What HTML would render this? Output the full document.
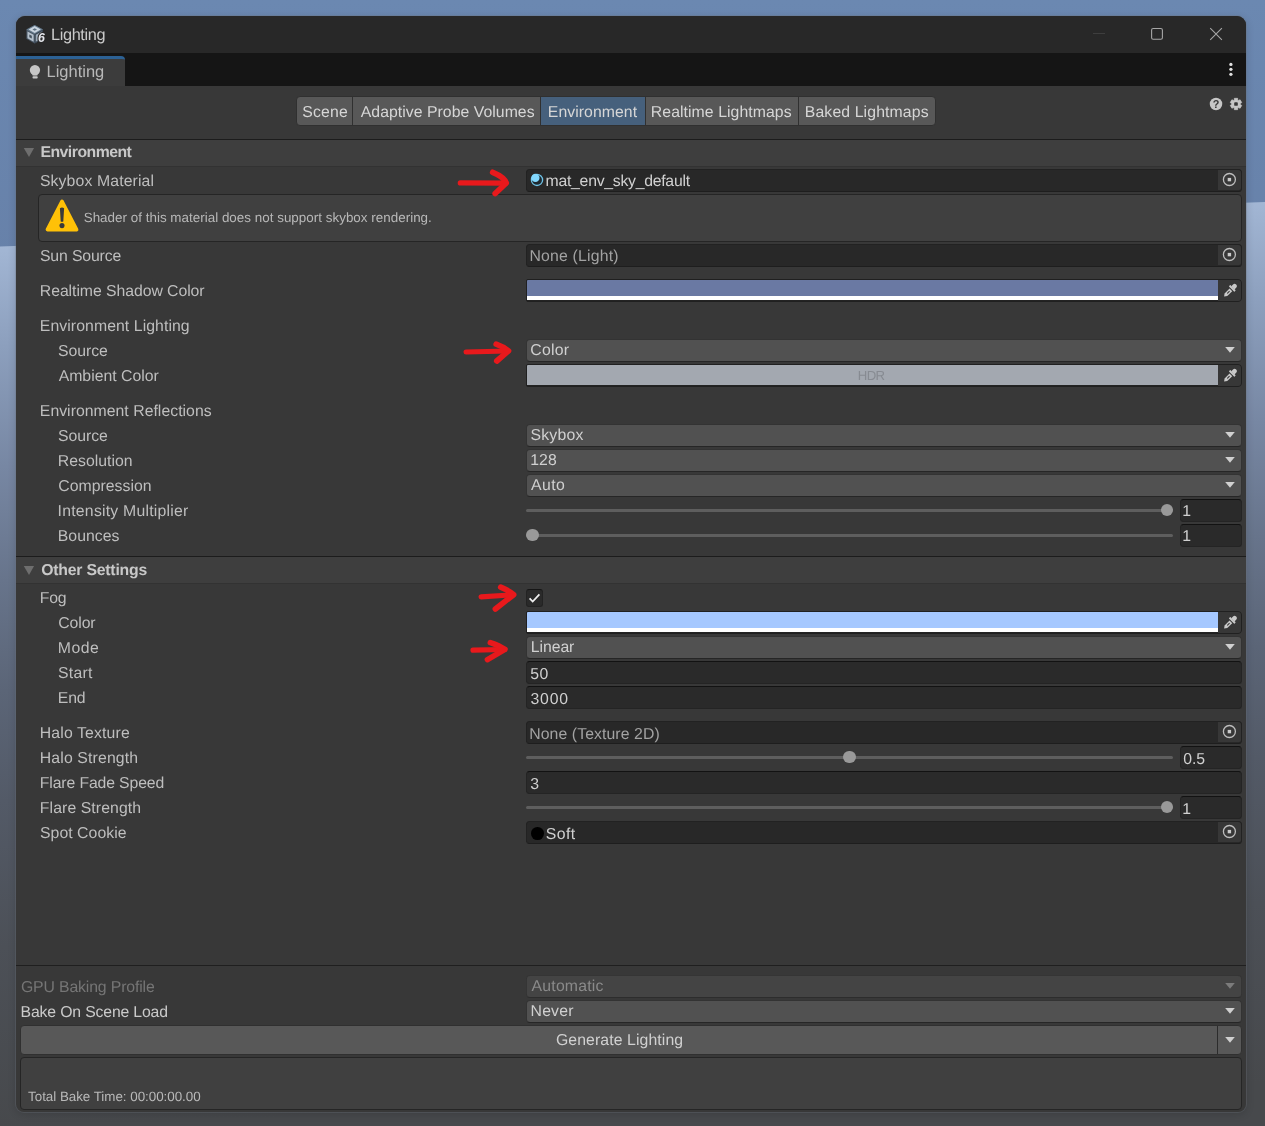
<!DOCTYPE html>
<html lang="en"><head><meta charset="utf-8"><title>Lighting</title>
<style>

html,body{margin:0;padding:0;}
body{width:1265px;height:1126px;overflow:hidden;position:relative;background:#5a6578;font-family:"Liberation Sans",sans-serif;}
.a{position:absolute;}
.t{position:absolute;white-space:nowrap;line-height:20px;height:20px;font-size:15.8px;color:#c4c4c4;text-rendering:geometricPrecision;}
.ttl{color:#cacaca;}
.tab{color:#b8b8b8;}
.btn{color:#d6d6d6;}
.hdr{font-weight:bold;color:#c8c8c8;}
.lbl{color:#bebebe;}
.lbl2{color:#cacaca;}
.dis{color:#757575;}
.disv{color:#8a8a8a;}
.val{color:#d0d0d0;}
.none{color:#a2a2a2;}
.hdr2{color:#878b92;}
.help{color:#b8b8b8;}
#win{position:absolute;left:16px;top:16px;width:1230px;height:1096px;border-radius:9px 9px 8px 8px;background:#383838;overflow:hidden;box-shadow:0 0 0 1px rgba(110,116,126,.3),0 2px 8px rgba(0,0,0,.16);}
.fld{position:absolute;box-sizing:border-box;height:23px;border-radius:3.5px;}
.obj{background:#282828;border:1px solid #222222;border-bottom-color:#1e1e1e;}
.num{background:#2a2a2a;border:1px solid #242424;border-top-color:#121212;}
.dd{background:#515151;border:1px solid #333333;border-bottom-color:#262626;border-radius:4px;}
.ddd{background:#444444;border:1px solid #353535;border-bottom-color:#2d2d2d;border-radius:4px;}
.pick{position:absolute;right:0;top:0;width:23px;height:20px;background:#373737;border-radius:0 3px 2px 0;}

</style></head><body>
<svg class="a" style="left:0;top:0" width="1265" height="1126" viewBox="0 0 1265 1126">
<defs>
<linearGradient id="sky" x1="0" y1="0" x2="0" y2="1"><stop offset="0" stop-color="#6b88b1"/><stop offset="1" stop-color="#6781a9"/></linearGradient>
<linearGradient id="gnd" gradientUnits="userSpaceOnUse" x1="0" y1="246.5" x2="30.9" y2="1126">
<stop offset="0" stop-color="#a2b6d4"/><stop offset="0.114" stop-color="#8c9fbd"/><stop offset="0.25" stop-color="#7787a3"/><stop offset="0.38" stop-color="#67748b"/><stop offset="0.505" stop-color="#5b6577"/><stop offset="0.63" stop-color="#535a67"/><stop offset="0.795" stop-color="#4c5057"/><stop offset="1" stop-color="#47494c"/></linearGradient>
</defs>
<rect width="1265" height="260" fill="url(#sky)"/>
<polygon points="0,246.5 1265,202 1265,1126 0,1126" fill="url(#gnd)"/>
</svg>
<div id="win">
<div class="a" style="left:-16px;top:-16px;width:1265px;height:1126px;will-change:transform">
<div class="a" style="left:16px;top:16px;width:1230px;height:37px;background:#282828"></div>
<div class="a" style="left:16px;top:53px;width:1230px;height:33px;background:#151515"></div>
<div class="a" style="left:16px;top:56px;width:109px;height:30px;background:#3c3c3c;border-top:3px solid #2c6194;box-sizing:border-box;border-radius:0 4px 0 0"></div>
<div class="a" style="left:296px;top:96px;width:640px;height:30px;box-sizing:border-box;background:#585858;border:1px solid #303030;border-radius:4px;overflow:hidden"><div class="a" style="left:244px;top:0;width:104px;height:28px;background:#46607c"></div><div class="a" style="left:55px;top:0;width:1px;height:28px;background:#303030"></div><div class="a" style="left:243px;top:0;width:1px;height:28px;background:#303030"></div><div class="a" style="left:348px;top:0;width:1px;height:28px;background:#303030"></div><div class="a" style="left:501px;top:0;width:1px;height:28px;background:#303030"></div></div>
<div class="a" style="left:16px;top:139px;width:1230px;height:28px;box-sizing:border-box;background:#3e3e3e;border-top:1px solid #1c1c1c;border-bottom:1px solid #323232"></div>
<svg class="a" style="left:23px;top:148px" width="12" height="10" viewBox="0 0 12 10"><polygon points="0.8,0 11.1,0 6,9" fill="#6e6e6e"/></svg>
<div class="a" style="left:16px;top:556px;width:1230px;height:28px;box-sizing:border-box;background:#3e3e3e;border-top:1px solid #1c1c1c;border-bottom:1px solid #323232"></div>
<svg class="a" style="left:23px;top:566px" width="12" height="10" viewBox="0 0 12 10"><polygon points="0.8,0 11.1,0 6,9" fill="#6e6e6e"/></svg>
<div class="a" style="left:16px;top:965px;width:1230px;height:1px;background:#1f1f1f"></div>
<div class="a" style="left:38px;top:194px;width:1204px;height:48px;box-sizing:border-box;background:#404040;border:1px solid #252525;border-radius:4px"></div>
<svg class="a" style="left:44px;top:197px" width="36" height="37" viewBox="0 0 36 37"><path d="M18 4.4 L32.6 32.6 L3.4 32.6 Z" fill="#ffc107" stroke="#ffc107" stroke-width="3.6" stroke-linejoin="round"/><path d="M15.9 11.2 Q18 10 20.1 11.2 L19.3 24.4 Q18 25 16.7 24.4 Z" fill="#3a3a3a"/><circle cx="18" cy="28.6" r="2.55" fill="#3a3a3a"/></svg>
<div class="fld obj" style="left:526px;top:169px;width:716px"><div class="pick"><svg class="a" style="left:4px;top:2px" width="15" height="15" viewBox="0 0 15 15"><circle cx="7.4" cy="7.5" r="6" fill="none" stroke="#bebebe" stroke-width="1.3"/><rect x="5.7" y="5.9" width="3.4" height="3.4" fill="#cacaca"/></svg></div></div>
<div class="fld obj" style="left:526px;top:244px;width:716px"><div class="pick"><svg class="a" style="left:4px;top:2px" width="15" height="15" viewBox="0 0 15 15"><circle cx="7.4" cy="7.5" r="6" fill="none" stroke="#bebebe" stroke-width="1.3"/><rect x="5.7" y="5.9" width="3.4" height="3.4" fill="#cacaca"/></svg></div></div>
<div class="fld" style="left:526px;top:279px;width:716px;background:#232323;border:1px solid #202020;border-radius:2px 4px 4px 2px;overflow:hidden"><div class="a" style="left:0;top:0;width:691px;height:20px;background:#6a79a3"></div><div class="a" style="left:0;top:16px;width:691px;height:4px;background:#ffffff"></div><div class="a" style="left:691px;top:0;width:23px;height:21px;background:#373737"></div><svg class="a" style="left:696.1px;top:1.7px" width="16" height="16" viewBox="0 0 16 16"><g transform="translate(1.1,14.6) rotate(-45)" fill="#c9c9c9"><path d="M0 0 L2.6 -1.9 L9.6 -1.9 L9.6 1.9 L2.6 1.9 Z"/><rect x="10.6" y="-3.9" width="2" height="7.8" rx="0.5"/><path d="M12.4 -2.2 L15.2 -2.2 Q17.1 -2.2 17.1 0 Q17.1 2.2 15.2 2.2 L12.4 2.2 Z"/><rect x="4.4" y="-0.55" width="3.4" height="1.1" rx="0.5" fill="#3a3a3a"/></g></svg></div>
<div class="fld dd" style="left:526px;top:339px;width:716px"></div>
<svg class="a" style="left:1224.6px;top:346.9px" width="10" height="6" viewBox="0 0 10 6"><polygon points="0.2,0.1 9.8,0.1 5,5.8" fill="#d0d0d0"/></svg>
<div class="fld" style="left:526px;top:364px;width:716px;background:#232323;border:1px solid #202020;border-radius:2px 4px 4px 2px;overflow:hidden"><div class="a" style="left:0;top:0;width:691px;height:20px;background:#a3a8b0"></div><div class="a" style="left:691px;top:0;width:23px;height:21px;background:#373737"></div><svg class="a" style="left:696.1px;top:1.7px" width="16" height="16" viewBox="0 0 16 16"><g transform="translate(1.1,14.6) rotate(-45)" fill="#c9c9c9"><path d="M0 0 L2.6 -1.9 L9.6 -1.9 L9.6 1.9 L2.6 1.9 Z"/><rect x="10.6" y="-3.9" width="2" height="7.8" rx="0.5"/><path d="M12.4 -2.2 L15.2 -2.2 Q17.1 -2.2 17.1 0 Q17.1 2.2 15.2 2.2 L12.4 2.2 Z"/><rect x="4.4" y="-0.55" width="3.4" height="1.1" rx="0.5" fill="#3a3a3a"/></g></svg></div>
<div class="fld dd" style="left:526px;top:424px;width:716px"></div>
<svg class="a" style="left:1224.6px;top:431.9px" width="10" height="6" viewBox="0 0 10 6"><polygon points="0.2,0.1 9.8,0.1 5,5.8" fill="#d0d0d0"/></svg>
<div class="fld dd" style="left:526px;top:449px;width:716px"></div>
<svg class="a" style="left:1224.6px;top:456.9px" width="10" height="6" viewBox="0 0 10 6"><polygon points="0.2,0.1 9.8,0.1 5,5.8" fill="#d0d0d0"/></svg>
<div class="fld dd" style="left:526px;top:474px;width:716px"></div>
<svg class="a" style="left:1224.6px;top:481.9px" width="10" height="6" viewBox="0 0 10 6"><polygon points="0.2,0.1 9.8,0.1 5,5.8" fill="#d0d0d0"/></svg>
<div class="a" style="left:526px;top:509.0px;width:647px;height:3px;background:#5e5e5e;border-radius:1.5px"></div>
<div class="a" style="left:1160.6000000000001px;top:503.9px;width:12.6px;height:12.6px;border-radius:50%;background:#999999"></div>
<div class="fld num" style="left:1180px;top:499px;width:62px"></div>
<div class="a" style="left:526px;top:534.0px;width:647px;height:3px;background:#5e5e5e;border-radius:1.5px"></div>
<div class="a" style="left:526.0px;top:528.9px;width:12.6px;height:12.6px;border-radius:50%;background:#999999"></div>
<div class="fld num" style="left:1180px;top:524px;width:62px"></div>
<div class="a" style="left:526px;top:589px;width:17px;height:18px;box-sizing:border-box;background:#2a2a2a;border:1px solid #232323;border-top-color:#161616;border-radius:3px"></div>
<svg class="a" style="left:527px;top:590px" width="15" height="16" viewBox="527 590 15 16"><path d="M529.6 598.4 L532.7 601.6 L539.4 594.4" stroke="#f0f0f0" stroke-width="1.7" fill="none"/></svg>
<div class="fld" style="left:526px;top:611px;width:716px;background:#232323;border:1px solid #202020;border-radius:2px 4px 4px 2px;overflow:hidden"><div class="a" style="left:0;top:0;width:691px;height:20px;background:#a5c8ff"></div><div class="a" style="left:0;top:16px;width:691px;height:4px;background:#ffffff"></div><div class="a" style="left:691px;top:0;width:23px;height:21px;background:#373737"></div><svg class="a" style="left:696.1px;top:1.7px" width="16" height="16" viewBox="0 0 16 16"><g transform="translate(1.1,14.6) rotate(-45)" fill="#c9c9c9"><path d="M0 0 L2.6 -1.9 L9.6 -1.9 L9.6 1.9 L2.6 1.9 Z"/><rect x="10.6" y="-3.9" width="2" height="7.8" rx="0.5"/><path d="M12.4 -2.2 L15.2 -2.2 Q17.1 -2.2 17.1 0 Q17.1 2.2 15.2 2.2 L12.4 2.2 Z"/><rect x="4.4" y="-0.55" width="3.4" height="1.1" rx="0.5" fill="#3a3a3a"/></g></svg></div>
<div class="fld dd" style="left:526px;top:636px;width:716px"></div>
<svg class="a" style="left:1224.6px;top:643.9px" width="10" height="6" viewBox="0 0 10 6"><polygon points="0.2,0.1 9.8,0.1 5,5.8" fill="#d0d0d0"/></svg>
<div class="fld num" style="left:526px;top:661px;width:716px"></div>
<div class="fld num" style="left:526px;top:686px;width:716px"></div>
<div class="fld obj" style="left:526px;top:721px;width:716px"><div class="pick"><svg class="a" style="left:4px;top:2px" width="15" height="15" viewBox="0 0 15 15"><circle cx="7.4" cy="7.5" r="6" fill="none" stroke="#bebebe" stroke-width="1.3"/><rect x="5.7" y="5.9" width="3.4" height="3.4" fill="#cacaca"/></svg></div></div>
<div class="a" style="left:526px;top:756.0px;width:647px;height:3px;background:#5e5e5e;border-radius:1.5px"></div>
<div class="a" style="left:843.3000000000001px;top:750.9px;width:12.6px;height:12.6px;border-radius:50%;background:#999999"></div>
<div class="fld num" style="left:1180px;top:746px;width:62px"></div>
<div class="fld num" style="left:526px;top:771px;width:716px"></div>
<div class="a" style="left:526px;top:806.0px;width:647px;height:3px;background:#5e5e5e;border-radius:1.5px"></div>
<div class="a" style="left:1160.6000000000001px;top:800.9px;width:12.6px;height:12.6px;border-radius:50%;background:#999999"></div>
<div class="fld num" style="left:1180px;top:796px;width:62px"></div>
<div class="fld obj" style="left:526px;top:821px;width:716px"><div class="pick"><svg class="a" style="left:4px;top:2px" width="15" height="15" viewBox="0 0 15 15"><circle cx="7.4" cy="7.5" r="6" fill="none" stroke="#bebebe" stroke-width="1.3"/><rect x="5.7" y="5.9" width="3.4" height="3.4" fill="#cacaca"/></svg></div></div>
<div class="fld ddd" style="left:526px;top:975px;width:716px"></div>
<svg class="a" style="left:1224.6px;top:982.9px" width="10" height="6" viewBox="0 0 10 6"><polygon points="0.2,0.1 9.8,0.1 5,5.8" fill="#7c7c7c"/></svg>
<div class="fld dd" style="left:526px;top:1000px;width:716px"></div>
<svg class="a" style="left:1224.6px;top:1007.9px" width="10" height="6" viewBox="0 0 10 6"><polygon points="0.2,0.1 9.8,0.1 5,5.8" fill="#d0d0d0"/></svg>
<div class="a" style="left:20px;top:1025px;width:1222px;height:30px;box-sizing:border-box;background:#585858;border:1px solid #303030;border-radius:4px"></div>
<div class="a" style="left:1217px;top:1026px;width:1px;height:28px;background:#2c2c2c"></div>
<svg class="a" style="left:1224.8px;top:1037px" width="10" height="6" viewBox="0 0 10 6"><polygon points="0.2,0.1 9.8,0.1 5,5.8" fill="#d0d0d0"/></svg>
<div class="a" style="left:20px;top:1057px;width:1222px;height:53px;box-sizing:border-box;background:#404040;border:1px solid #252525;border-radius:4px"></div>
<svg class="a" style="left:530px;top:173px" width="14" height="14" viewBox="530 173 14 14"><circle cx="537" cy="179.9" r="5.6" fill="#1d2930" stroke="#6fc2e6" stroke-width="1.3"/><circle cx="535.4" cy="177.9" r="4.15" fill="#82d8ff"/></svg>
<div class="a" style="left:531.1px;top:827.1px;width:12.8px;height:12.8px;border-radius:50%;background:#000"></div>
<div class="a" style="left:1093px;top:33px;width:12px;height:1px;background:#3e3e3e"></div>
<svg class="a" style="left:1150px;top:27px" width="14" height="14" viewBox="1150 27 14 14"><rect x="1151.6" y="28.5" width="10.8" height="10.8" rx="1.6" fill="none" stroke="#a6a6a6" stroke-width="1.1"/></svg>
<svg class="a" style="left:1209px;top:27px" width="14" height="14" viewBox="1209 27 14 14"><path d="M1210.2 28.2 L1221.9 39.9 M1221.9 28.2 L1210.2 39.9" stroke="#a6a6a6" stroke-width="1.1"/></svg>
<svg class="a" style="left:1228px;top:62px" width="6" height="15" viewBox="1228 62 6 15"><circle cx="1230.9" cy="64.4" r="1.65" fill="#e0e0e0"/><circle cx="1230.9" cy="69.35" r="1.65" fill="#e0e0e0"/><circle cx="1230.9" cy="74.3" r="1.65" fill="#e0e0e0"/></svg>
<svg class="a" style="left:1209px;top:97px" width="14" height="14" viewBox="1209 97 14 14"><circle cx="1216" cy="104" r="6.25" fill="#c6c6c6"/><text x="1216" y="107.9" font-size="10.8" font-weight="bold" text-anchor="middle" fill="#383838" font-family="Liberation Sans, sans-serif">?</text></svg>
<svg class="a" style="left:1229px;top:97px" width="14" height="14" viewBox="-7 -7 14 14"><polygon points="-1.80,-3.69 -1.63,-5.67 1.63,-5.67 1.80,-3.69 2.29,-3.40 4.10,-4.24 5.72,-1.43 4.09,-0.29 4.09,0.29 5.72,1.43 4.10,4.24 2.29,3.40 1.80,3.69 1.63,5.67 -1.63,5.67 -1.80,3.69 -2.29,3.40 -4.10,4.24 -5.72,1.43 -4.09,0.29 -4.09,-0.29 -5.72,-1.43 -4.10,-4.24 -2.29,-3.40" fill="#c6c6c6" stroke="#c6c6c6" stroke-width="0.7" stroke-linejoin="round"/><rect x="-1.8" y="-1.8" width="3.6" height="3.6" rx="0.9" fill="#383838"/></svg>
<svg class="a" style="left:25px;top:23px" width="22" height="22" viewBox="25 23 22 22"><polygon points="34.70,24.90 43.00,29.60 43.00,38.80 34.70,43.50 26.40,38.80 26.40,29.60" fill="#4a5866"/><polygon points="34.70,24.90 43.00,29.60 34.70,34.20 26.40,29.60" fill="#64788a"/><polygon points="34.70,34.20 43.00,29.60 43.00,38.80 34.70,43.50" fill="#3a4653"/><polygon points="34.70,26.12 40.84,29.59 34.70,33.00 28.56,29.59" fill="#c9d4df"/><polygon points="27.48,31.40 33.62,34.80 33.62,41.69 27.48,38.21" fill="#b4c0cc"/><polygon points="35.78,34.80 41.92,31.40 41.92,38.21 35.78,41.69" fill="#9dabb9"/><polygon points="34.70,28.31 36.94,29.58 34.70,30.82 32.46,29.58" fill="#5d7080"/><polygon points="29.30,34.45 31.80,35.83 31.80,38.62 29.30,37.21" fill="#46535f"/><text x="41.4" y="42.4" font-size="12.2" font-weight="bold" font-style="italic" text-anchor="middle" fill="#e6e8ee" stroke="#282828" stroke-width="2.2" paint-order="stroke" font-family="Liberation Sans, sans-serif">6</text></svg>
<svg class="a" style="left:28px;top:64px" width="14" height="16" viewBox="28 64 14 16"><circle cx="34.95" cy="70.05" r="5.15" fill="#c6c6c6"/><rect x="32.5" y="73.6" width="4.9" height="1.9" fill="#c6c6c6"/><rect x="32.5" y="76.2" width="5.2" height="2.2" rx="0.9" fill="#c6c6c6"/></svg>
<svg class="a" style="left:455px;top:167px" width="58" height="32" viewBox="455 167 58 32"><g stroke="#e8191c" stroke-width="5.2" fill="none" stroke-linecap="round" stroke-linejoin="round"><path d="M460.3 182.9 L505.9 183.1"/><path stroke-width="5.7" d="M492.7 172.3 Q504.5 177.2 506.29999999999995 183.0 L495.2 193.5"/></g></svg>
<svg class="a" style="left:461px;top:339px" width="55" height="28" viewBox="461 339 55 28"><g stroke="#e8191c" stroke-width="5.2" fill="none" stroke-linecap="round" stroke-linejoin="round"><path d="M466.1 352.0 L508.1 351.0"/><path stroke-width="5.7" d="M496.2 344.2 Q504.04999999999995 347.1 508.5 350.9 L496.8 361.0"/></g></svg>
<svg class="a" style="left:476px;top:582px" width="45" height="32" viewBox="476 582 45 32"><g stroke="#e8191c" stroke-width="5.2" fill="none" stroke-linecap="round" stroke-linejoin="round"><path d="M481.1 596.8 L513.2 594.8"/><path stroke-width="5.7" d="M500.7 587.2 Q508.85 590.5 513.6 594.6999999999999 L495.4 608.9"/></g></svg>
<svg class="a" style="left:468px;top:637px" width="44" height="28" viewBox="468 637 44 28"><g stroke="#e8191c" stroke-width="5.2" fill="none" stroke-linecap="round" stroke-linejoin="round"><path d="M473.0 650.1 L504.5 649.5"/><path stroke-width="5.7" d="M490.4 642.6 Q499.34999999999997 645.55 504.9 649.4 L487.5 659.6"/></g></svg>
<span class="t ttl" style="left:51.09px;top:25.00px;font-size:16.3px;letter-spacing:-0.372px;">Lighting</span>
<span class="t tab" style="left:46.53px;top:62.00px;font-size:16.5px;letter-spacing:-0.005px;">Lighting</span>
<span class="t btn" style="left:302.27px;top:103.00px;letter-spacing:0.184px;">Scene</span>
<span class="t btn" style="left:360.76px;top:103.00px;letter-spacing:0.039px;">Adaptive Probe Volumes</span>
<span class="t btn" style="left:547.82px;top:103.00px;letter-spacing:0.059px;">Environment</span>
<span class="t btn" style="left:650.82px;top:103.00px;letter-spacing:0.069px;">Realtime Lightmaps</span>
<span class="t btn" style="left:804.82px;top:103.00px;letter-spacing:0.119px;">Baked Lightmaps</span>
<span class="t hdr" style="left:40.45px;top:143.00px;letter-spacing:-0.514px;">Environment</span>
<span class="t hdr" style="left:41.23px;top:561.00px;letter-spacing:-0.217px;">Other Settings</span>
<span class="t lbl" style="left:39.94px;top:172.00px;letter-spacing:0.118px;">Skybox Material</span>
<span class="t lbl" style="left:39.94px;top:247.00px;letter-spacing:-0.136px;">Sun Source</span>
<span class="t lbl" style="left:39.82px;top:282.00px;letter-spacing:-0.058px;">Realtime Shadow Color</span>
<span class="t lbl" style="left:39.82px;top:317.00px;letter-spacing:0.075px;">Environment Lighting</span>
<span class="t lbl" style="left:57.94px;top:342.00px;letter-spacing:-0.021px;">Source</span>
<span class="t lbl" style="left:58.65px;top:367.00px;letter-spacing:0.010px;">Ambient Color</span>
<span class="t lbl" style="left:39.82px;top:402.00px;letter-spacing:0.027px;">Environment Reflections</span>
<span class="t lbl" style="left:57.94px;top:427.00px;letter-spacing:-0.021px;">Source</span>
<span class="t lbl" style="left:57.82px;top:452.00px;letter-spacing:0.007px;">Resolution</span>
<span class="t lbl" style="left:58.35px;top:477.00px;letter-spacing:0.015px;">Compression</span>
<span class="t lbl" style="left:57.62px;top:502.00px;letter-spacing:0.228px;">Intensity Multiplier</span>
<span class="t lbl" style="left:57.82px;top:527.00px;letter-spacing:0.022px;">Bounces</span>
<span class="t lbl" style="left:39.82px;top:589.00px;letter-spacing:-0.218px;">Fog</span>
<span class="t lbl" style="left:58.35px;top:614.00px;letter-spacing:-0.140px;">Color</span>
<span class="t lbl" style="left:57.82px;top:639.00px;letter-spacing:0.461px;">Mode</span>
<span class="t lbl" style="left:57.94px;top:664.00px;letter-spacing:0.264px;">Start</span>
<span class="t lbl" style="left:57.82px;top:689.00px;letter-spacing:-0.220px;">End</span>
<span class="t lbl" style="left:39.82px;top:724.00px;letter-spacing:0.136px;">Halo Texture</span>
<span class="t lbl" style="left:39.82px;top:749.00px;letter-spacing:0.136px;">Halo Strength</span>
<span class="t lbl" style="left:39.82px;top:774.00px;letter-spacing:-0.133px;">Flare Fade Speed</span>
<span class="t lbl" style="left:39.82px;top:799.00px;letter-spacing:0.091px;">Flare Strength</span>
<span class="t lbl" style="left:39.94px;top:824.00px;letter-spacing:0.058px;">Spot Cookie</span>
<span class="t dis" style="left:20.95px;top:978.00px;letter-spacing:-0.138px;">GPU Baking Profile</span>
<span class="t lbl2" style="left:20.62px;top:1003.00px;letter-spacing:-0.163px;">Bake On Scene Load</span>
<span class="t val" style="left:545.59px;top:172.00px;letter-spacing:-0.268px;">mat_env_sky_default</span>
<span class="t none" style="left:529.53px;top:247.00px;letter-spacing:0.187px;">None (Light)</span>
<span class="t val" style="left:530.34px;top:341.00px;letter-spacing:0.233px;">Color</span>
<span class="t val" style="left:530.40px;top:426.00px;letter-spacing:0.254px;">Skybox</span>
<span class="t val" style="left:530.21px;top:451.00px;letter-spacing:0.126px;">128</span>
<span class="t val" style="left:531.09px;top:476.00px;letter-spacing:0.382px;">Auto</span>
<span class="t val" style="left:1182.27px;top:502.00px;">1</span>
<span class="t val" style="left:1182.27px;top:527.00px;">1</span>
<span class="t val" style="left:530.86px;top:638.00px;letter-spacing:-0.082px;">Linear</span>
<span class="t val" style="left:530.19px;top:665.00px;letter-spacing:0.578px;">50</span>
<span class="t val" style="left:530.46px;top:690.00px;letter-spacing:0.850px;">3000</span>
<span class="t none" style="left:529.23px;top:725.00px;letter-spacing:0.085px;">None (Texture 2D)</span>
<span class="t val" style="left:1183.20px;top:750.00px;letter-spacing:-0.054px;">0.5</span>
<span class="t val" style="left:530.16px;top:775.00px;">3</span>
<span class="t val" style="left:1182.27px;top:800.00px;">1</span>
<span class="t val" style="left:545.69px;top:825.00px;letter-spacing:0.441px;">Soft</span>
<span class="t disv" style="left:531.60px;top:977.00px;letter-spacing:0.191px;">Automatic</span>
<span class="t val" style="left:530.62px;top:1002.00px;letter-spacing:0.161px;">Never</span>
<span class="t val" style="left:555.95px;top:1031.00px;letter-spacing:0.099px;">Generate Lighting</span>
<span class="t hdr2" style="left:857.85px;top:366.00px;font-size:13.2px;letter-spacing:-0.673px;">HDR</span>
<span class="t help" style="left:83.68px;top:208.00px;font-size:13.4px;letter-spacing:0.022px;">Shader of this material does not support skybox rendering.</span>
<span class="t help" style="left:28.08px;top:1087.00px;font-size:13.4px;letter-spacing:-0.033px;">Total Bake Time: 00:00:00.00</span>
</div></div></body></html>
